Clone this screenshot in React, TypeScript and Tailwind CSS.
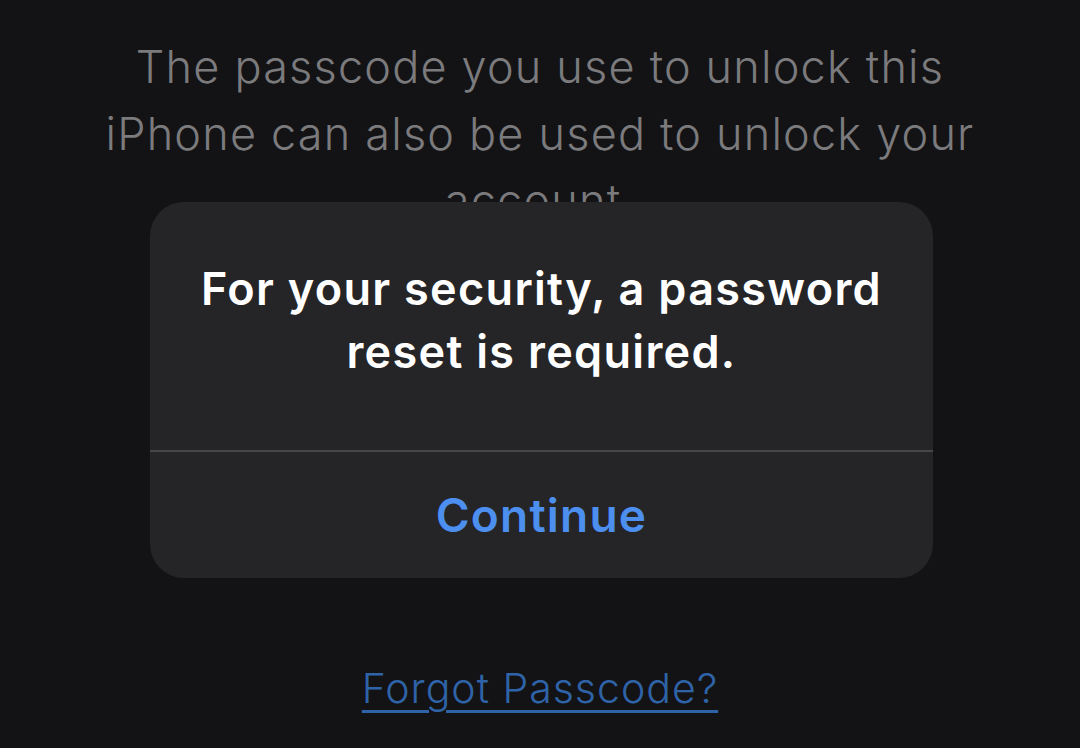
import React from "react";

const App: React.FC = () => {
  return (
    <div
      className="relative w-[1080px] h-[748px] overflow-hidden bg-[#131315]"
      style={{ fontFamily: "Inter, 'Noto Sans', sans-serif" }}
    >
      {/* Background page */}
      <div className="flex flex-col items-center h-full pt-[33px]">
        <p className="w-[900px] text-center text-[45px] leading-[67px] font-light text-[#7b7b7e] tracking-[1.2px]">
          The passcode you use to unlock this iPhone can also be used to unlock your account.
        </p>
        <a className="mt-auto mb-[32px] text-[41px] leading-[56px] text-[#2f63a8] underline decoration-[3px] underline-offset-[7px] font-light tracking-[1px]">
          Forgot Passcode?
        </a>
      </div>

      {/* Alert */}
      <div className="absolute left-[150px] top-[202px] w-[783px] h-[376px] rounded-[34px] bg-[#252527] flex flex-col">
        <div className="h-[248px] flex items-center justify-center px-8 pb-[12px]">
          <h2 className="text-center text-[45px] leading-[63px] font-semibold text-white tracking-[1.3px]">
            For your security, a password
            <br />
            reset is required.
          </h2>
        </div>
        <div className="h-[2px] bg-[#47474a]" />
        <button className="flex-1 flex items-center justify-center text-[46px] font-semibold text-[#4c8fef] tracking-[1.2px]">
          Continue
        </button>
      </div>
    </div>
  );
};

export default App;
